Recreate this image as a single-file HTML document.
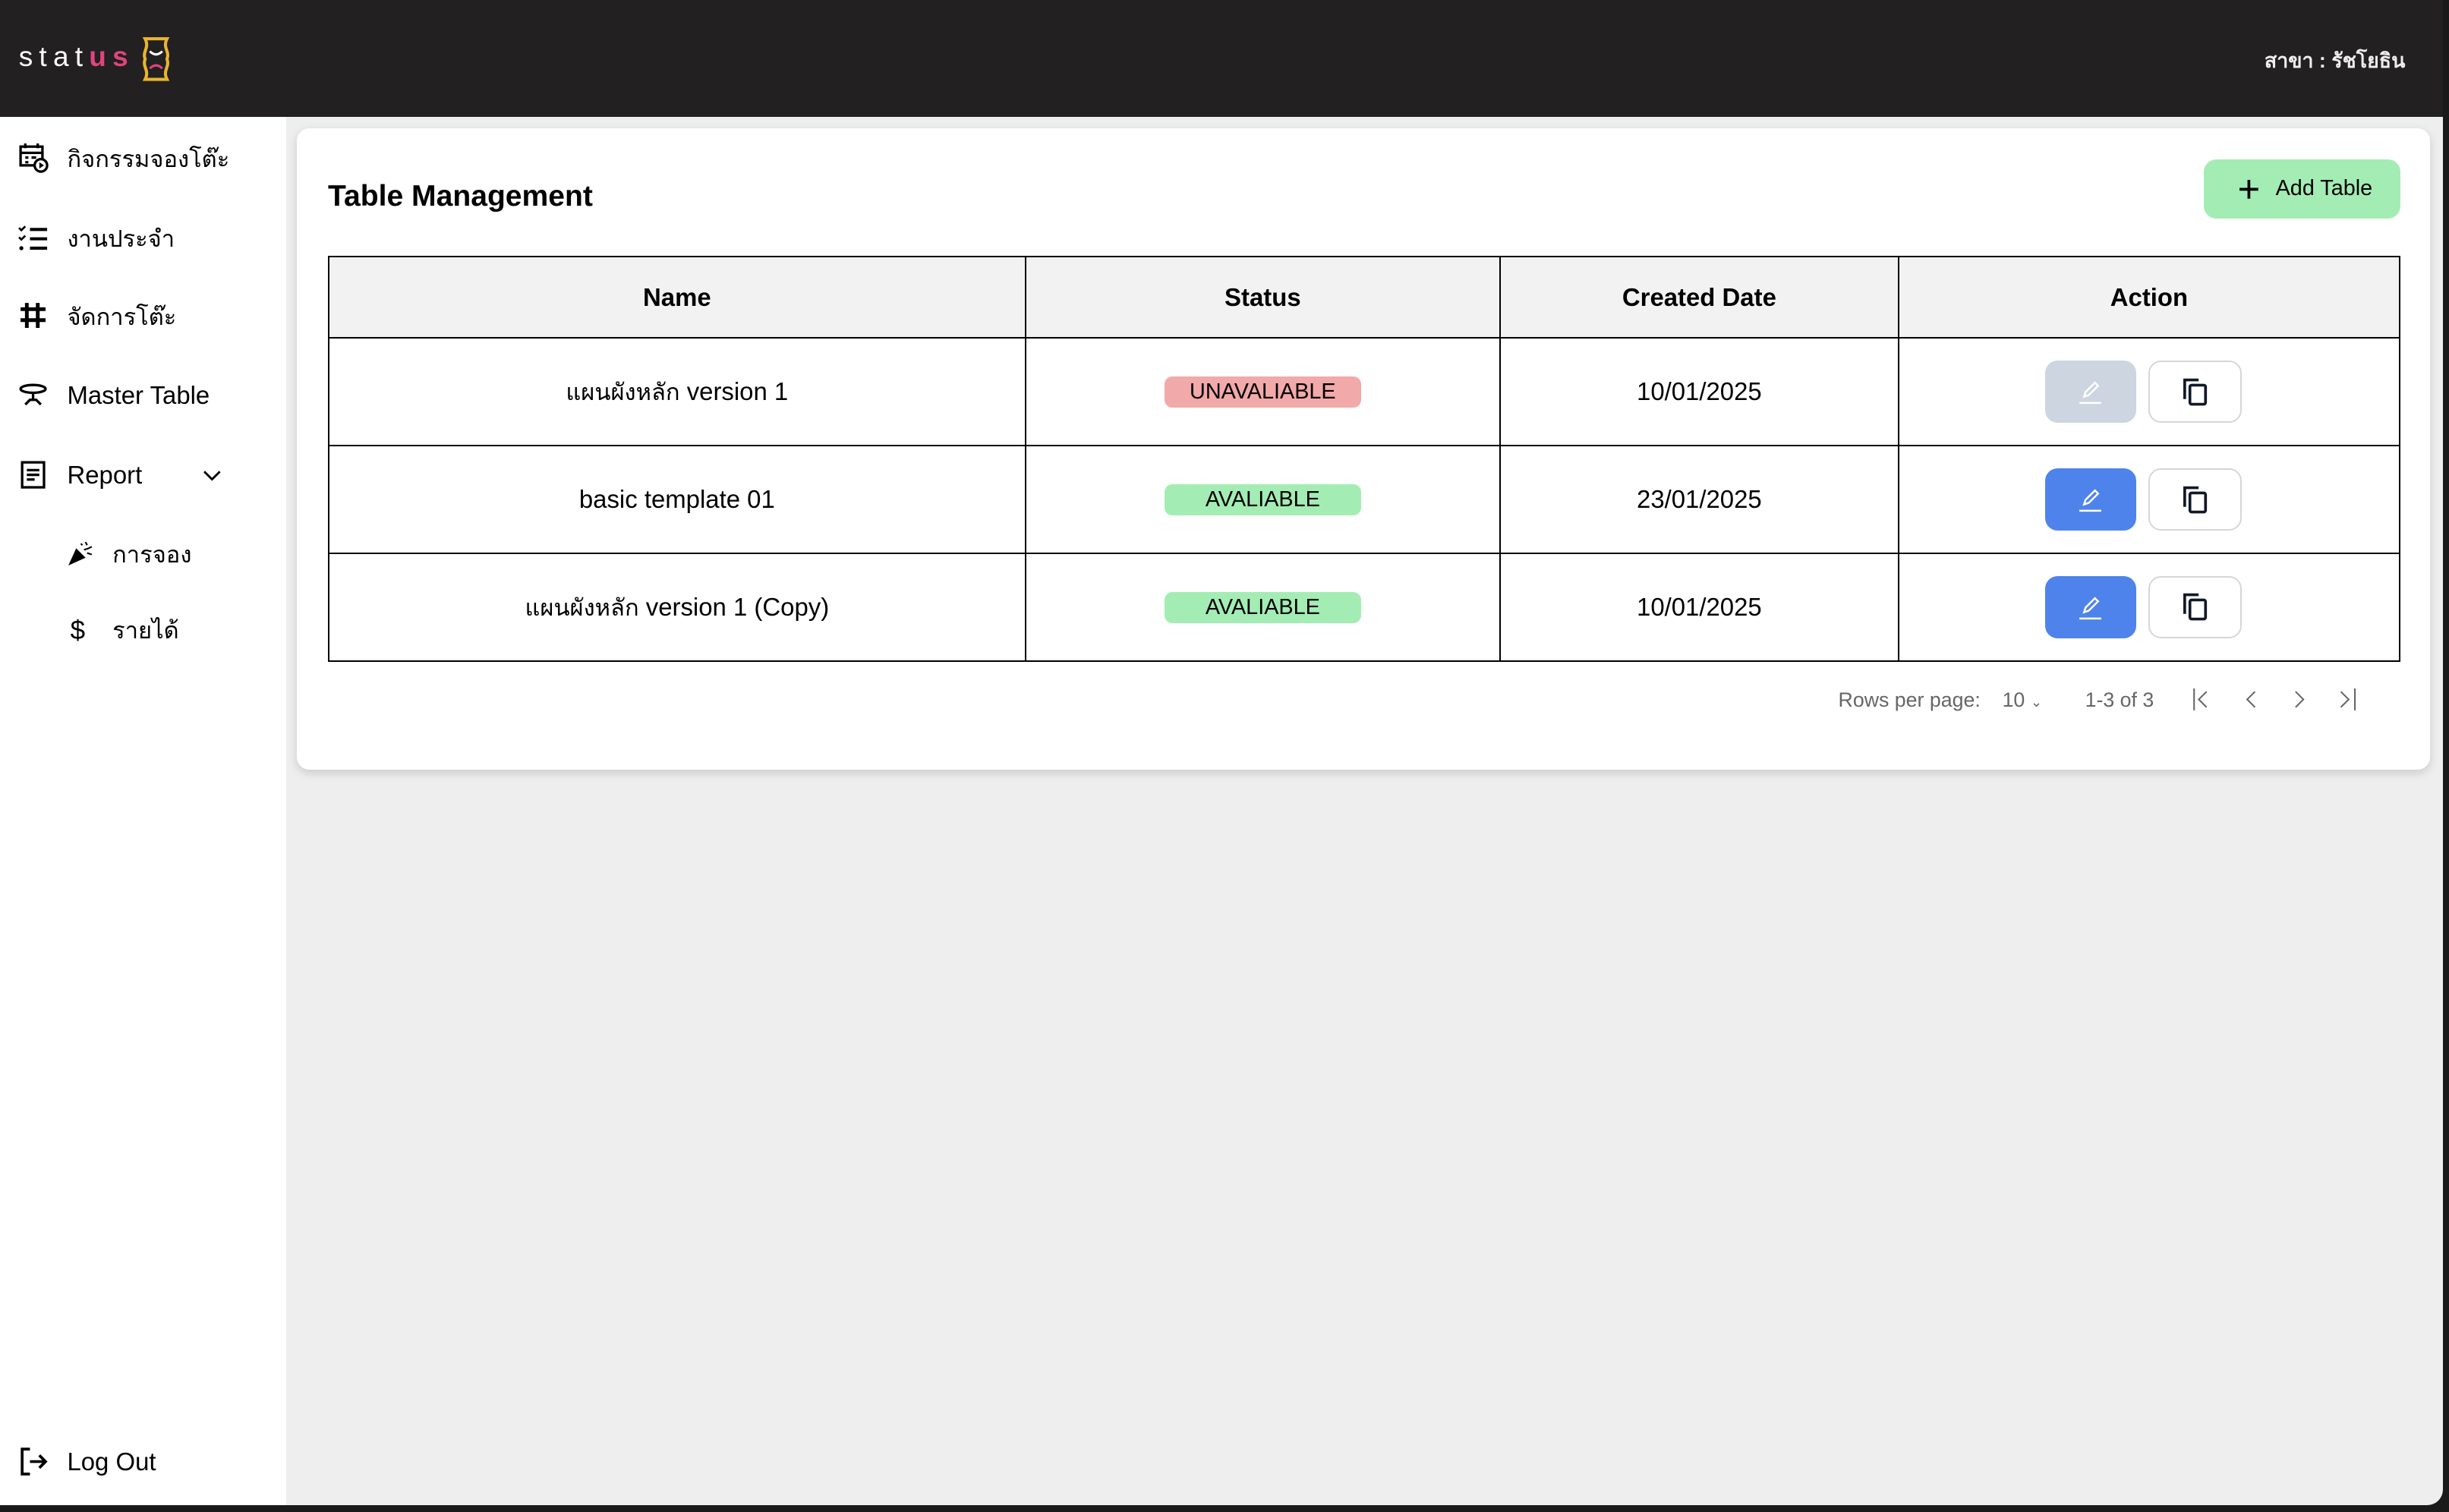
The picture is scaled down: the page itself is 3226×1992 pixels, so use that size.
<!DOCTYPE html>
<html><head><meta charset="utf-8">
<style>
html,body{margin:0;padding:0;background:#2f2f2f;}
body{width:3226px;height:1992px;overflow:hidden;}
#root{zoom:2.0574;width:1568px;height:968px;position:relative;font-family:"Liberation Sans",sans-serif;color:#000;background:#1a1a1a;}
#frame{position:absolute;left:0;top:0;width:1564px;height:964px;background:#eeeeee;border-bottom-right-radius:10px;overflow:hidden;}
.hdr{position:absolute;left:0;top:0;width:1564px;height:75px;background:#222021;}
.logo{position:absolute;left:12px;top:26px;font-size:18px;letter-spacing:4px;color:#fff;}
.logo b{color:#e0447e;}
.branch{position:absolute;right:24px;top:28px;color:#eee;font-size:13px;font-weight:bold;}
.side{position:absolute;left:0;top:75px;width:183px;height:889px;background:#fff;}
.item{position:absolute;left:0;height:24px;display:flex;align-items:center;font-size:16px;}
.item svg{position:absolute;left:11px;}
.item span{position:absolute;left:43px;white-space:nowrap;top:3px;}
.item span.th{top:1px;}
.th{font-size:15px;}
.card{position:absolute;left:190px;top:82px;width:1366px;height:411px;background:#fff;border-radius:8px;box-shadow:0 2px 6px rgba(0,0,0,.15);}
.title{position:absolute;left:20px;top:33px;font-size:19px;font-weight:bold;}
.add{position:absolute;left:1221px;top:20px;width:126px;height:38px;background:#a3edb4;border-radius:8px;font-size:14px;}
.add span{position:absolute;left:46px;top:11px;}
table{position:absolute;left:20px;top:82px;width:1327px;border-collapse:collapse;}
td,th{border:1px solid #000;text-align:center;font-size:16px;padding:0;}
th{background:#f2f2f2;height:51px;font-weight:bold;}
td{height:68px;}
.badge{display:inline-block;width:126px;height:20px;line-height:20px;border-radius:5px;font-size:14px;}
.r{background:#f2a9a9}.g{background:#a3edb4}
.btns{display:flex;justify-content:center;gap:8px;margin-right:7px;}
.eb{width:58px;height:40px;border-radius:8px;display:flex;align-items:center;justify-content:center;}
.cb{width:58px;height:38px;border:1px solid #d4d6da;border-radius:8px;display:flex;align-items:center;justify-content:center;}
.pg{position:absolute;top:359px;font-size:13px;color:#666;}
</style></head><body><div id="root"><div id="frame">
<div class="hdr">
 <div class="logo">stat<b>us</b></div>
 <svg style="position:absolute;left:90px;top:23px" width="20" height="30" viewBox="0 0 20 30"><path d="M3 2h14c-3 6 2 8 0 13c2 5-3 7 0 13H3c3-6-2-8 0-13c-2-5 3-7 0-13z" fill="none" stroke="#e8b530" stroke-width="2"/><path d="M6 10q4 4 8 0" stroke="#fff" fill="none" stroke-width="1.5"/><path d="M6 21q4-4 8 0" stroke="#e0447e" fill="none" stroke-width="1.5"/></svg>
 <div class="branch">สาขา : รัชโยธิน</div>
</div>
<div class="side">
 <div class="item" style="top:14px"><svg width="20" height="20" viewBox="0 0 20 20" fill="none" stroke="#000" stroke-width="1.6"><rect x="2" y="3" width="14" height="12"/><path d="M2 7h14M5 1v3M13 1v3M5 10h2M5 13h2M9 10h3"/><circle cx="15" cy="15" r="4" fill="#fff"/><path d="M14 13l3 2-3 2z" fill="#000" stroke="none"/></svg><span class="th">กิจกรรมจองโต๊ะ</span></div>
 <div class="item" style="top:65px"><svg width="20" height="20" viewBox="0 0 20 20" fill="none" stroke="#000" stroke-width="2"><path d="M8 5h11M8 11h11M8 17h11"/><path d="M1 4l1.5 1.5L5 3M1 10l1.5 1.5L5 9" stroke-width="1.3"/><circle cx="2.5" cy="17" r="1.3" fill="#000" stroke="none"/></svg><span class="th">งานประจำ</span></div>
 <div class="item" style="top:115px"><svg width="20" height="20" viewBox="0 0 20 20" fill="none" stroke="#000" stroke-width="2.4"><path d="M6 2v16M13 2v16M2 6h16M2 13h16"/></svg><span class="th">จัดการโต๊ะ</span></div>
 <div class="item" style="top:166px"><svg width="20" height="20" viewBox="0 0 20 20" fill="none" stroke="#000" stroke-width="1.6"><ellipse cx="10" cy="6" rx="8" ry="2.5"/><path d="M10 8.5v5M5 16l3-3h4l3 3"/></svg><span>Master Table</span></div>
 <div class="item" style="top:217px"><svg width="20" height="20" viewBox="0 0 20 20" fill="none" stroke="#000" stroke-width="1.6"><rect x="3" y="2" width="14" height="16"/><path d="M6 7h8M6 10h8M6 13h5"/></svg><span>Report</span><svg style="left:130px" width="12" height="12" viewBox="0 0 12 12"><path d="M1 4l5 5 5-5" fill="none" stroke="#000" stroke-width="1.4"/></svg></div>
 <div class="item" style="top:267px"><svg style="left:43px" width="18" height="18" viewBox="0 0 18 18"><path d="M1 17l5-11 6 6z" fill="#000"/><path d="M9 3l1 1M12 2l1 2M14 6l2-1M11 7l3-1M13 9l3 1" stroke="#000" stroke-width="1"/></svg><span class="th" style="left:72px">การจอง</span></div>
 <div class="item" style="top:316px"><span style="left:45px;font-size:17px">$</span><span class="th" style="left:72px">รายได้</span></div>
 <div class="item" style="top:849px"><svg width="20" height="20" viewBox="0 0 20 20" fill="none" stroke="#000" stroke-width="1.8"><path d="M8 2H3v16h5M8 10h10M14 6l4 4-4 4"/></svg><span>Log Out</span></div>
</div>
<div class="card">
 <div class="title">Table Management</div>
 <div class="add"><svg style="position:absolute;left:22px;top:12px" width="14" height="14" viewBox="0 0 14 14"><path d="M7 1v12M1 7h12" stroke="#000" stroke-width="1.8"/></svg><span>Add Table</span></div>
 <table>
  <colgroup><col style="width:446px"><col style="width:304px"><col style="width:255px"><col></colgroup>
  <tr><th>Name</th><th>Status</th><th>Created Date</th><th>Action</th></tr>
  <tr><td><span class="th">แผนผังหลัก</span> version 1</td><td><span class="badge r">UNAVALIABLE</span></td><td>10/01/2025</td><td><div class="btns"><div class="eb" style="background:#cdd5e0"><svg width="16" height="16" viewBox="0 0 16 16" fill="none" stroke="#fff" stroke-width="1.2"><path d="M4 11l1-3 6-6 2 2-6 6zM1 15h14"/></svg></div><div class="cb"><svg width="20" height="20" viewBox="0 0 18 18" fill="none" stroke="#111827" stroke-width="1.6"><path d="M3 13V2h8"/><rect x="6" y="5" width="9" height="11" rx="1"/></svg></div></div></td></tr>
  <tr><td>basic template 01</td><td><span class="badge g">AVALIABLE</span></td><td>23/01/2025</td><td><div class="btns"><div class="eb" style="background:#4f83ec"><svg width="16" height="16" viewBox="0 0 16 16" fill="none" stroke="#fff" stroke-width="1.2"><path d="M4 11l1-3 6-6 2 2-6 6zM1 15h14"/></svg></div><div class="cb"><svg width="20" height="20" viewBox="0 0 18 18" fill="none" stroke="#111827" stroke-width="1.6"><path d="M3 13V2h8"/><rect x="6" y="5" width="9" height="11" rx="1"/></svg></div></div></td></tr>
  <tr><td><span class="th">แผนผังหลัก</span> version 1 (Copy)</td><td><span class="badge g">AVALIABLE</span></td><td>10/01/2025</td><td><div class="btns"><div class="eb" style="background:#4f83ec"><svg width="16" height="16" viewBox="0 0 16 16" fill="none" stroke="#fff" stroke-width="1.2"><path d="M4 11l1-3 6-6 2 2-6 6zM1 15h14"/></svg></div><div class="cb"><svg width="20" height="20" viewBox="0 0 18 18" fill="none" stroke="#111827" stroke-width="1.6"><path d="M3 13V2h8"/><rect x="6" y="5" width="9" height="11" rx="1"/></svg></div></div></td></tr>
 </table>
 <div class="pg" style="left:987px">Rows per page:</div>
 <div class="pg" style="left:1092px">10 <span style="font-size:9px">&#8964;</span></div>
 <div class="pg" style="left:1145px">1-3 of 3</div>
 <svg style="position:absolute;left:1212px;top:358px" width="112" height="16" viewBox="0 0 112 16" fill="none" stroke="#666" stroke-width="1"><path d="M3 1v14M11 3l-5 5 5 5M42 3l-5 5 5 5M68 3l5 5-5 5M97 3l5 5-5 5M106 1v14"/></svg>
</div>
</div></div></body></html>
